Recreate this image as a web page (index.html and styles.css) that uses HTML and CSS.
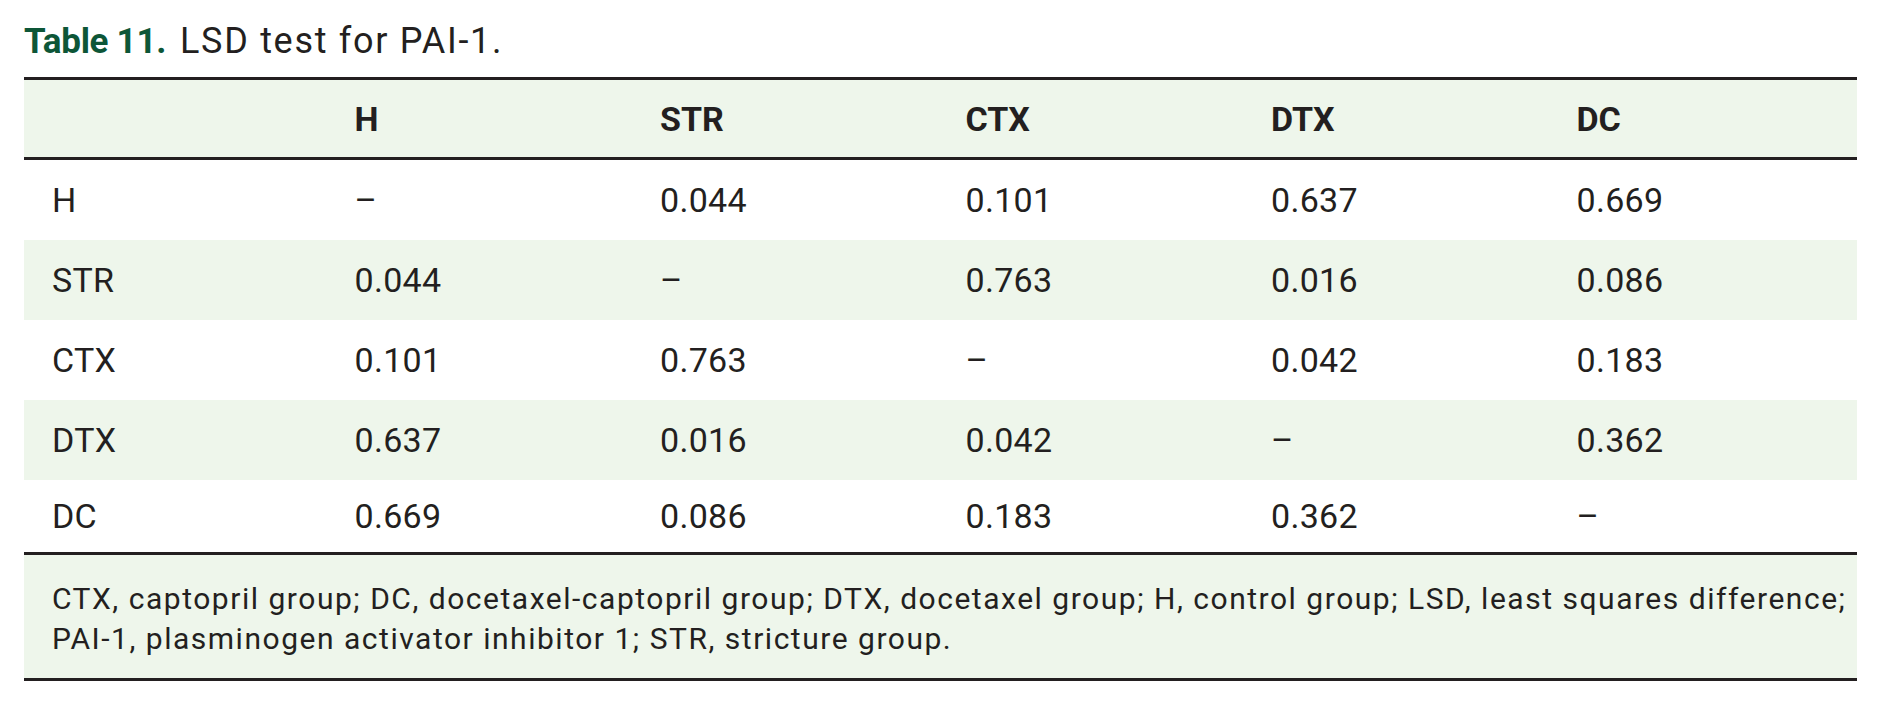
FILE: index.html
```html
<!DOCTYPE html>
<html lang="en">
<head>
<meta charset="utf-8">
<title>Table 11. LSD test for PAI-1.</title>
<link rel="stylesheet" href="styles.css">
</head>
<body>
<div class="wrap">
  <h1 class="caption"><span class="label">Table 11.</span><span class="text">LSD test for PAI-1.</span></h1>
  <table class="lsd">
    <thead>
      <tr>
        <th></th><th>H</th><th>STR</th><th>CTX</th><th>DTX</th><th>DC</th>
      </tr>
    </thead>
    <tbody>
      <tr><td>H</td><td>–</td><td>0.044</td><td>0.101</td><td>0.637</td><td>0.669</td></tr>
      <tr class="alt"><td>STR</td><td>0.044</td><td>–</td><td>0.763</td><td>0.016</td><td>0.086</td></tr>
      <tr><td>CTX</td><td>0.101</td><td>0.763</td><td>–</td><td>0.042</td><td>0.183</td></tr>
      <tr class="alt"><td>DTX</td><td>0.637</td><td>0.016</td><td>0.042</td><td>–</td><td>0.362</td></tr>
      <tr class="last"><td>DC</td><td>0.669</td><td>0.086</td><td>0.183</td><td>0.362</td><td>–</td></tr>
    </tbody>
    <tfoot>
      <tr>
        <td colspan="6">CTX, captopril group; DC, docetaxel-captopril group; DTX, docetaxel group; H, control group; LSD, least squares difference;<br>PAI-1, plasminogen activator inhibitor 1; STR, stricture group.</td>
      </tr>
    </tfoot>
  </table>
</div>
</body>
</html>
```

FILE: styles.css
```css
html, body {
  margin: 0;
  padding: 0;
  background: #ffffff;
}

body {
  font-family: Roboto, "Liberation Sans", sans-serif;
  color: #231f20;
}

.wrap {
  padding: 0 24px;
}

.caption {
  margin: 0;
  padding-top: 20px;
  height: 60px;
  font-size: 36px;
  font-weight: 400;
  line-height: 42px;
  box-sizing: border-box;
  white-space: nowrap;
}

.caption .label {
  color: #0d5637;
  font-weight: 700;
  font-size: 35px;
  letter-spacing: -0.3px;
  margin-right: 14px;
}

.caption .text {
  letter-spacing: 1.7px;
}

.lsd {
  width: 1833px;
  border-collapse: collapse;
  table-layout: fixed;
  margin-top: 17px;
}

.lsd th,
.lsd td {
  text-align: left;
  padding: 0 0 0 25px;
  vertical-align: middle;
}

.lsd th:first-child,
.lsd td:first-child {
  padding-left: 28px;
}

.lsd thead tr {
  background: #eef6eb;
}

.lsd th {
  height: 77px;
  font-size: 34px;
  font-weight: 700;
  border-top: 3px solid #231f20;
  border-bottom: 3px solid #231f20;
}

.lsd tbody td {
  height: 80px;
  font-size: 34px;
  letter-spacing: 0.3px;
}

.lsd tbody tr.alt {
  background: #eef6eb;
}

.lsd tbody tr.last td {
  height: 72px;
}

.lsd tfoot td {
  background: #eef6eb;
  font-size: 30px;
  line-height: 40px;
  letter-spacing: 1.52px;
  white-space: nowrap;
  padding: 24px 0 19px 28px;
  border-top: 3px solid #231f20;
  border-bottom: 3px solid #231f20;
}
```
